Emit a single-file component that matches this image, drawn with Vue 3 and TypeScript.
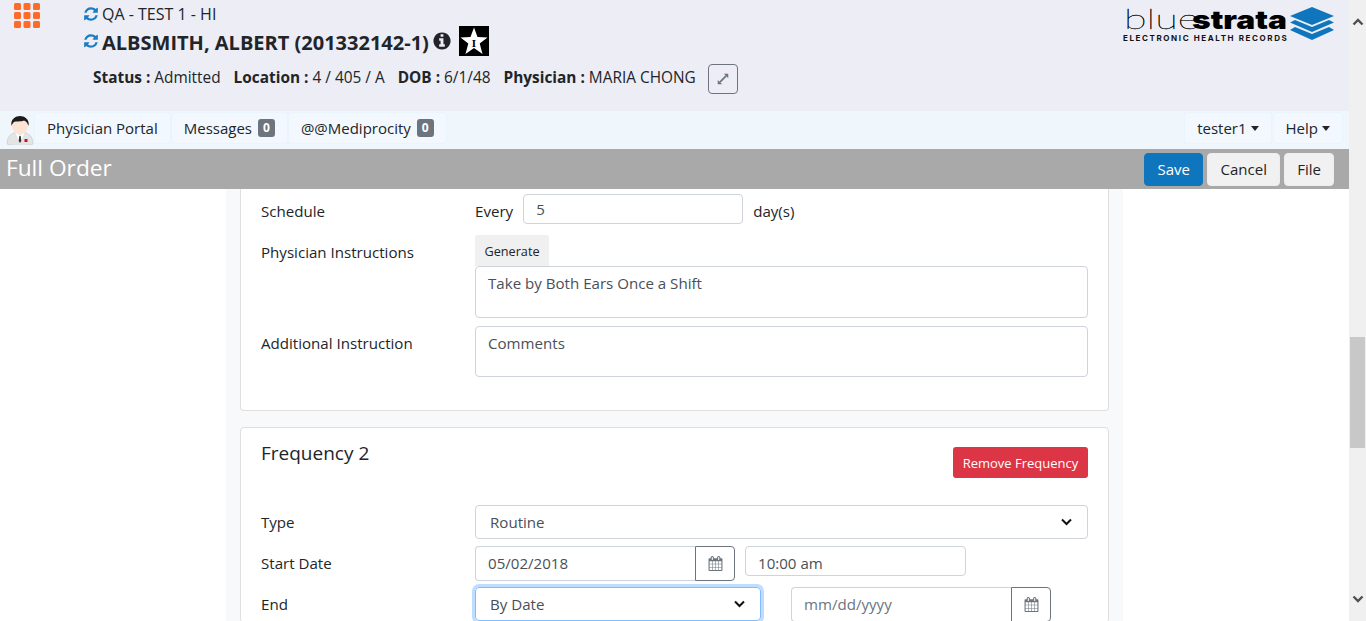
<script setup lang="ts">
const refreshPath = 'M1639 1056q0 5-1 7-64 268-268 434.5t-478 166.5q-146 0-282.5-55t-243.5-157l-129 129q-19 19-45 19t-45-19-19-45v-448q0-26 19-45t45-19h448q26 0 45 19t19 45-19 45l-137 137q71 66 161 102t187 36q134 0 250-65t186-179q11-17 53-117 8-23 30-23h192q13 0 22.5 9.5t9.5 22.5zm25-800v448q0 26-19 45t-45 19h-448q-26 0-45-19t-19-45 19-45l138-138q-148-137-349-137-134 0-250 65t-186 179q-11 17-53 117-8 23-30 23h-199q-13 0-22.5-9.5t-9.5-22.5v-7q65-268 270-434.5t480-166.5q146 0 284 55.5t245 156.5l130-129q19-19 45-19t45 19 19 45z'
const calendarPath = 'M192 1664h288v-288h-288v288zm352 0h320v-288h-320v288zm-352-352h288v-320h-288v320zm352 0h320v-320h-320v320zm-352-384h288v-288h-288v288zm736 736h320v-288h-320v288zm-384-736h320v-288h-320v288zm768 736h288v-288h-288v288zm-384-352h320v-320h-320v320zm-352-864v-288q0-13-9.5-22.5t-22.5-9.5h-64q-13 0-22.5 9.5t-9.5 22.5v288q0 13 9.5 22.5t22.5 9.5h64q13 0 22.5-9.5t9.5-22.5zm736 864h288v-320h-288v320zm-384-384h320v-288h-320v288zm384 0h288v-288h-288v288zm32-480v-288q0-13-9.5-22.5t-22.5-9.5h-64q-13 0-22.5 9.5t-9.5 22.5v288q0 13 9.5 22.5t22.5 9.5h64q13 0 22.5-9.5t9.5-22.5zm384-64v1280q0 52-38 90t-90 38h-1408q-52 0-90-38t-38-90v-1280q0-52 38-90t90-38h128v-96q0-66 47-113t113-47h64q66 0 113 47t47 113v96h384v-96q0-66 47-113t113-47h64q66 0 113 47t47 113v96h128q52 0 90 38t38 90z'
const infoPath = 'M1152 1376v-160q0-14-9-23t-23-9h-96v-512q0-14-9-23t-23-9h-320q-14 0-23 9t-9 23v160q0 14 9 23t23 9h96v320h-96q-14 0-23 9t-9 23v160q0 14 9 23t23 9h448q14 0 23-9t9-23zm-128-896v-160q0-14-9-23t-23-9h-192q-14 0-23 9t-9 23v160q0 14 9 23t23 9h192q14 0 23-9t9-23zm640 416q0 209-103 385.5t-279.5 279.5-385.5 103-385.5-103-279.5-279.5-103-385.5 103-385.5 279.5-279.5 385.5-103 385.5 103 279.5 279.5 103 385.5z'
const gridCells = Array.from({ length: 9 }, (_, i) => ({ x: (i % 3) * 9.5, y: Math.floor(i / 3) * 9 }))
</script>

<template>
  <div class="page">
    <div class="main">
      <header class="patient">
        <svg class="apps" viewBox="0 0 26 25" width="26" height="25">
          <rect v-for="(c, i) in gridCells" :key="i" :x="c.x" :y="c.y" width="7" height="7" rx="1.5" fill="#fd6b2b" />
        </svg>
        <div class="patient-info">
          <div class="site">
            <svg class="refresh" viewBox="0 0 1792 1792"><path :d="refreshPath" /></svg>
            <span>QA - TEST 1 - HI</span>
          </div>
          <div class="name">
            <svg class="refresh" viewBox="0 0 1792 1792"><path :d="refreshPath" /></svg>
            <span class="name-text">ALBSMITH, ALBERT (201332142-1)</span>
            <svg class="info" viewBox="0 0 1792 1792"><path :d="infoPath" /></svg>
            <svg class="star" viewBox="0 0 30 30">
              <rect width="30" height="30" fill="#000" />
              <polygon points="15,1.500 18.500,11 28.500,11.500 20.700,17.500 23.500,28 15,22 6.500,28 9.300,17.500 1.500,11.500 11.500,11" fill="#fff" />
              <text x="15" y="20.500" text-anchor="middle" class="star-letter">I</text>
            </svg>
          </div>
          <div class="facts">
            <span><b>Status :</b> Admitted</span>
            <span><b>Location :</b> 4 / 405 / A</span>
            <span><b>DOB :</b> 6/1/48</span>
            <span><b>Physician :</b> MARIA CHONG</span>
            <button class="expand" type="button" aria-label="Expand">
              <svg viewBox="0 0 16 16" width="14" height="14">
                <path d="M4.500 11.500 11.500 4.500" stroke="#6c757d" stroke-width="2" />
                <path d="M9 2h5v5zM7 14H2V9z" fill="#6c757d" />
              </svg>
            </button>
          </div>
        </div>
        <div class="logo">
          <div class="logo-text">
            <div class="logo-word"><span class="thin">blue</span><span class="heavy">strata</span></div>
            <div class="logo-sub">ELECTRONIC HEALTH RECORDS</div>
          </div>
          <svg viewBox="0 0 44 34" width="44" height="34">
            <polygon points="22,0 44,9 22,18 0,9" fill="#0f75bc" />
            <polygon points="5,13 22,20 39,13 44,15.500 22,25 0,15.500" fill="#0f75bc" />
            <polygon points="5,20 22,27 39,20 44,23 22,33 0,23" fill="#0f75bc" />
          </svg>
        </div>
      </header>

      <nav class="topnav">
        <svg class="avatar" viewBox="0 0 28 30" width="28" height="30">
          <path d="M1 29c0-8 5-12 13-12s13 4 13 12c-3 2-23 2-26 0z" fill="#e4e4e4" stroke="#c4c4c4" stroke-width=".6" />
          <path d="M10.500 17l3.500 4 3.500-4 1 1-4.500 10-4.500-10z" fill="#fff" />
          <path d="M13.300 21h1.400l.6 5-1.300 2-1.300-2z" fill="#333" />
          <rect x="18.500" y="24" width="3" height="3" fill="#d01020" />
          <ellipse cx="14" cy="10.500" rx="8" ry="9" fill="#fde3d3" />
          <path d="M5.500 11C4 4 10 1 14 1s10 3 8.500 10c-1-3-2.500-5-4.500-5.500C15 7 9.500 6 8 7c-1 1-2 2-2.500 4z" fill="#1c1c1c" />
        </svg>
        <a class="nav-link">Physician Portal</a>
        <a class="nav-link">Messages <span class="badge">0</span></a>
        <a class="nav-link">@@Mediprocity <span class="badge">0</span></a>
        <span class="nav-space"></span>
        <a class="nav-link user">tester1<i class="caret"></i></a>
        <a class="nav-link">Help<i class="caret"></i></a>
      </nav>

      <div class="titlebar">
        <h1>Full Order</h1>
        <div class="actions">
          <button class="btn primary" type="button">Save</button>
          <button class="btn cancel" type="button">Cancel</button>
          <button class="btn" type="button">File</button>
        </div>
      </div>

      <div class="content">
        <div class="column">
          <section class="card first">
            <div class="row schedule">
              <label>Schedule</label>
              <div class="inline">
                <span>Every</span>
                <input class="field every" value="5" />
                <span>day(s)</span>
              </div>
            </div>
            <div class="row instructions">
              <label>Physician Instructions</label>
              <div>
                <button class="generate" type="button">Generate</button>
                <div class="area tall">Take by Both Ears Once a Shift</div>
              </div>
            </div>
            <div class="row additional">
              <label>Additional Instruction</label>
              <div class="area">Comments</div>
            </div>
          </section>

          <section class="card second">
            <div class="card-head">
              <h2>Frequency 2</h2>
              <button class="remove" type="button">Remove Frequency</button>
            </div>
            <div class="row type">
              <label>Type</label>
              <div class="select">Routine
                <svg class="chevron" viewBox="0 0 12 8" width="13" height="8"><path d="M1.500 1.500 6 6l4.500-4.500" fill="none" stroke="#111" stroke-width="2" /></svg>
              </div>
            </div>
            <div class="row start">
              <label>Start Date</label>
              <div class="inline gap-10">
                <div class="date">
                  <input class="field" value="05/02/2018" />
                  <span class="cal"><svg viewBox="0 0 1792 1792"><path :d="calendarPath" /></svg></span>
                </div>
                <input class="field time" value="10:00 am" />
              </div>
            </div>
            <div class="row end">
              <label>End</label>
              <div class="inline gap-30">
                <div class="select focused">By Date
                  <svg class="chevron" viewBox="0 0 12 8" width="13" height="8"><path d="M1.500 1.500 6 6l4.500-4.500" fill="none" stroke="#111" stroke-width="2" /></svg>
                </div>
                <div class="date">
                  <input class="field" placeholder="mm/dd/yyyy" />
                  <span class="cal"><svg viewBox="0 0 1792 1792"><path :d="calendarPath" /></svg></span>
                </div>
              </div>
            </div>
          </section>
        </div>
      </div>
    </div>

    <aside class="scrollbar">
      <svg viewBox="0 0 12 8" width="12" height="8"><path d="M1.500 6.500 6 2l4.500 4.500" fill="none" stroke="#505050" stroke-width="2.400" /></svg>
      <div class="thumb"></div>
      <svg viewBox="0 0 12 8" width="12" height="8"><path d="M1.500 1.500 6 6l4.500-4.500" fill="none" stroke="#505050" stroke-width="2.400" /></svg>
    </aside>
  </div>
</template>

<style>
html, body { margin: 0; height: 100%; overflow: hidden; }
</style>

<style scoped>
.page {
  display: flex;
  height: 621px;
  overflow: hidden;
  font-family: "Open Sans", "Noto Sans", sans-serif;
  font-size: 15.100px;
  color: #212529;
  background: #fff;
}
.main {
  flex: 1;
  min-width: 0;
  display: flex;
  flex-direction: column;
}

/* patient header */
.patient {
  height: 111px;
  flex: none;
  display: flex;
  background: #ecedf5;
  box-sizing: border-box;
}
.apps { margin: 3px 0 0 14px; flex: none; }
.patient-info { margin-left: 43px; flex: 1; padding-top: 4px; }
.site, .name { display: flex; align-items: center; }
.site { height: 20px; font-size: 16px; }
.refresh { width: 16px; height: 16px; fill: #1a7cc3; margin-right: 3px; flex: none; }
.name { height: 32px; margin-top: 1px; font-size: 20px; font-weight: 700; }
.name-text { padding-top: 2px; }
.info { width: 20px; height: 20px; fill: #212529; margin-left: 3px; }
.star { width: 30px; height: 30px; margin-left: 7px; }
.star-letter { font-family: "Liberation Serif", serif; font-size: 11px; font-weight: 700; fill: #000; }
.facts { display: flex; align-items: center; gap: 13px; margin: 7px 0 0 10px; font-size: 15.400px; }
.facts > span { margin-bottom: 4px; }
.facts b { font-weight: 700; }
.expand {
  width: 30px;
  height: 30px;
  margin-left: -1px;
  padding: 0;
  display: flex;
  align-items: center;
  justify-content: center;
  background: transparent;
  border: 1px solid #6c757d;
  border-radius: 4px;
}
.logo { display: flex; gap: 3px; padding: 7px 15px 0 0; align-items: flex-start; }
.logo-text { width: 164px; }
.logo-word { display: flex; align-items: baseline; height: 24px; line-height: 24px; color: #000; white-space: nowrap; }
.thin {
  display: inline-block;
  width: 68px;
  font-family: Lato, sans-serif;
  font-weight: 100;
  font-size: 27px;
  margin-left: 1px;
  transform: scaleX(1.54);
  transform-origin: left;
  -webkit-text-stroke: .3px #000;
}
.heavy {
  display: inline-block;
  font-family: Inter, sans-serif;
  font-weight: 900;
  font-size: 26px;
  transform: scaleX(1.22);
  transform-origin: left;
}
.logo-sub { font-family: Inter, sans-serif; font-weight: 700; font-size: 8px; letter-spacing: 1.6px; color: #111; margin-top: 2px; white-space: nowrap; }

/* nav */
.topnav {
  height: 38px;
  flex: none;
  display: flex;
  align-items: flex-start;
  background: #eff7fd;
  padding: 1px 6px 0 6px;
  box-sizing: border-box;
}
.avatar { flex: none; margin-top: 3px; }
.nav-link {
  height: 32px;
  display: flex;
  align-items: center;
  gap: 6px;
  padding: 0 12px;
  box-sizing: border-box;
  border: 1px solid #eaf4fc;
  border-radius: 4px;
  background: #f2f8fe;
  font-size: 15px;
}
.nav-link.user { margin-right: 1px; }
.nav-space { flex: 1; }
.badge {
  background: #6c757d;
  color: #fff;
  font-size: 12px;
  font-weight: 700;
  border-radius: 3px;
  padding: 0 5px;
  line-height: 18px;
}
.caret {
  display: inline-block;
  border-top: 5px solid #212529;
  border-left: 4.500px solid transparent;
  border-right: 4.500px solid transparent;
  margin-left: -2px;
}

/* title bar */
.titlebar {
  height: 40px;
  flex: none;
  display: flex;
  align-items: center;
  justify-content: space-between;
  background: #a9a9a9;
  padding: 0 15px 0 6px;
  box-sizing: border-box;
}
.titlebar h1 { margin: 0 0 4px; font-size: 22.700px; font-weight: 400; color: #fff; }
.actions { display: flex; gap: 4px; }
.btn {
  height: 33px;
  padding: 0 12px;
  border: 1px solid #eee;
  border-radius: 4px;
  background: #f1f1f1;
  color: #212529;
  font: inherit;
  font-size: 15px;
}
.btn.cancel { width: 73px; padding: 0; }
.btn.primary { width: 59px; padding: 0; background: #0f75bc; border-color: #0f75bc; color: #fff; }

/* form */
.content { flex: 1; min-height: 0; overflow: hidden; }
.column {
  width: 869px;
  margin-left: 226px;
  padding: 0 14px;
  height: 100%;
  background: #f8f9fa;
}
.card {
  background: #fff;
  border: 1px solid #dfdfdf;
  border-radius: 4px;
  padding: 0 20px;
}
.card.first { border-top: 0; border-top-left-radius: 0; border-top-right-radius: 0; height: 222px; box-sizing: border-box; padding-top: 5px; }
.card.second { margin-top: 16px; padding-top: 19px; }
.card-head { display: flex; justify-content: space-between; height: 58px; }
.card-head h2 { margin: 0; font-size: 19px; font-weight: 400; line-height: 13px; }
.remove {
  height: 31px;
  width: 135px;
  padding: 0;
  border: 0;
  border-radius: 3px;
  background: #dc3545;
  color: #fff;
  font: inherit;
  font-size: 13px;
}
.row { display: grid; grid-template-columns: 214px 1fr; }
.row label { padding-top: 7px; }
.inline { display: flex; align-items: center; gap: 10px; }
.gap-10 { gap: 10px; align-items: flex-start; }
.gap-30 { gap: 30px; align-items: flex-start; }
.field {
  box-sizing: border-box;
  height: 30px;
  padding: 0 12px;
  border: 1px solid #ced4da;
  border-radius: 4px;
  font: inherit;
  color: #495057;
  background: #fff;
  outline: none;
  min-width: 0;
}
.field::placeholder { color: #6c757d; opacity: 1; }
.every { width: 220px; }
.schedule { height: 41px; }
.schedule .inline { height: 30px; }
.schedule .inline span { margin-top: 3px; }
.instructions { height: 91px; }
.generate {
  display: block;
  height: 31px;
  width: 74px;
  padding: 0;
  border: 0;
  border-radius: 3px 3px 0 0;
  background: #f0f0f0;
  color: #212529;
  font: inherit;
  font-size: 12.700px;
}
.area {
  box-sizing: border-box;
  height: 51px;
  padding: 6px 12px;
  border: 1px solid #ced4da;
  border-radius: 4px;
  color: #495057;
}
.area.tall { height: 52px; }
.select {
  position: relative;
  box-sizing: border-box;
  height: 34px;
  line-height: 32px;
  padding-left: 14px;
  border: 1px solid #ced4da;
  border-radius: 4px;
  color: #495057;
}
.select.focused {
  width: 286px;
  border-color: #80bdff;
  box-shadow: 0 0 0 3px rgba(0, 123, 255, .25);
}
.chevron { position: absolute; right: 14px; top: 12px; }
.type { height: 41px; }
.start { height: 41px; }
.date { display: flex; width: 260px; height: 35px; }
.date .field { flex: 1; height: 100%; padding-bottom: 2px; border-radius: 4px 0 0 4px; border-right: 0; }
.cal {
  width: 40px;
  box-sizing: border-box;
  display: flex;
  align-items: center;
  justify-content: center;
  border: 1px solid #6c757d;
  border-radius: 0 4px 4px 0;
}
.cal svg { width: 15px; height: 15px; fill: #6c757d; }
.time { width: 221px; padding-top: 3px; }

/* scrollbar */
.scrollbar {
  width: 17px;
  flex: none;
  position: relative;
  background: #f0f0f0;
  display: flex;
  flex-direction: column;
  justify-content: space-between;
  align-items: center;
  padding: 18px 0 18px;
  box-sizing: border-box;
}
.thumb {
  position: absolute;
  left: 1px;
  right: 1px;
  top: 337px;
  height: 111px;
  background: #c8c8c8;
}
</style>
